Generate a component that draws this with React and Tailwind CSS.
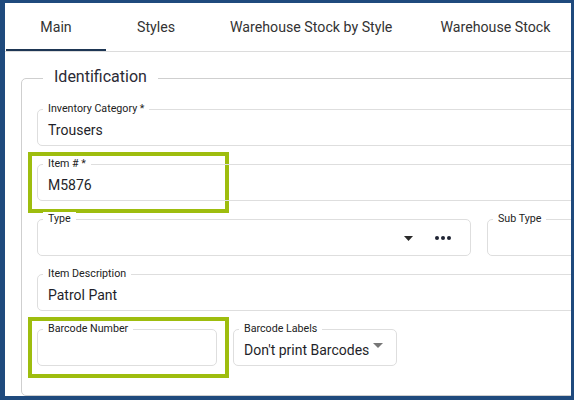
const tabs = ["Main", "Styles", "Warehouse Stock by Style", "Warehouse Stock"];

function Field({ label, value, className = "", children }) {
  return (
    <div className={`relative h-[37px] border border-[#dedede] rounded-[5px] ${className}`}>
      <span className="absolute -top-[8px] left-[5px] px-[5px] bg-white text-[10.7px] leading-[13px] text-[#222] whitespace-nowrap">
        {label}
      </span>
      <div className="flex items-center h-full pl-[10px] pr-3 pt-[5px] text-[14px] leading-[20px] text-[#1f1f2a] whitespace-nowrap">
        {value}
        {children}
      </div>
    </div>
  );
}

function Highlight({ children }) {
  return (
    <div className="relative">
      <div className="absolute -left-[9px] -top-[12px] w-[201px] h-[61px] border-[4px] border-[#9ebd0e] pointer-events-none" />
      {children}
    </div>
  );
}

export default function App() {
  return (
    <div className="w-[574px] h-[400px] border-t-[3px] border-l-[5px] border-r-[3px] border-b-[4px] border-[#1f4a7d] bg-white overflow-hidden font-['Roboto',sans-serif]">
      {/* TABS */}
      <div className="flex h-[49px] border-b border-[#dcdcdc] pl-[1px] w-[800px]">
        {tabs.map((t, i) => (
          <div
            key={t}
            className="relative min-w-[100px] h-[48px] px-6 pt-[1px] flex items-center justify-center text-[14.2px] text-[#333] whitespace-nowrap"
          >
            {t}
            {i === 0 && <div className="absolute left-0 right-0 bottom-0 h-[2px] bg-[#1e3654]" />}
          </div>
        ))}
      </div>

      {/* IDENTIFICATION */}
      <div className="pl-4 pt-[26px]">
        <div className="relative w-[760px] border border-[#cfcfcf] rounded-[5px] pl-[15px] pt-[30px] pb-[29px]">
          <span className="absolute -top-[12px] left-[21px] px-[11px] bg-white text-[16px] leading-[20px] text-[#2b2b35]">
            Identification
          </span>

          <div className="flex flex-col gap-[18px] pr-4">
            <Field label="Inventory Category *" value="Trousers" />

            <Highlight>
              <Field label="Item # *" value="M5876" />
            </Highlight>

            <div className="flex gap-4">
              <Field label="Type" className="w-[434px]">
                <div className="ml-auto flex items-center gap-[22px] pr-[7px] -mt-[4px]">
                  <svg width="9" height="5" viewBox="0 0 9 5">
                    <path d="M0 0h9L4.5 5z" fill="#2a2a2a" />
                  </svg>
                  <div className="flex gap-[2px]">
                    <span className="w-[4px] h-[4px] rounded-full bg-[#1f2433]" />
                    <span className="w-[4px] h-[4px] rounded-full bg-[#1f2433]" />
                    <span className="w-[4px] h-[4px] rounded-full bg-[#1f2433]" />
                  </div>
                </div>
              </Field>
              <Field label="Sub Type" className="flex-1" />
            </div>

            <Field label="Item Description" value="Patrol Pant" />

            <div className="flex gap-4">
              <Highlight>
                <Field label="Barcode Number" className="w-[180px]" />
              </Highlight>
              <Field label="Barcode Labels" value="Don't print Barcodes" className="w-[164px]">
                <svg width="10" height="5" viewBox="0 0 10 5" className="ml-[4px] -mt-[10px]">
                  <path d="M0 0h10L5 5z" fill="#777" />
                </svg>
              </Field>
            </div>
          </div>
        </div>
      </div>
    </div>
  );
}
